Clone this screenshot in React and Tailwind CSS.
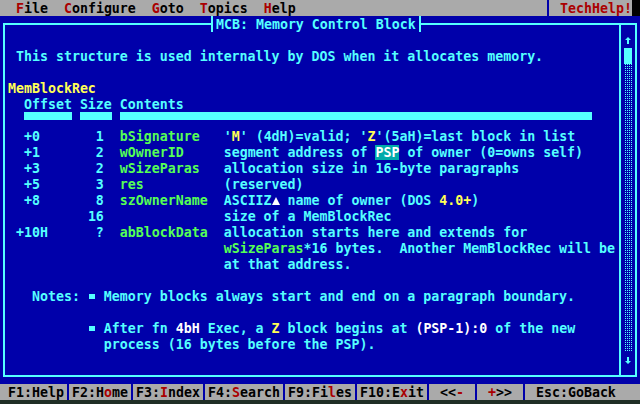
const BOX = {
  tl: 'M3 7H8V9H5V16H3Z',
  tr: 'M0 7H5V16H3V9H0Z',
  bl: 'M3 0H5V7H8V9H3Z',
  br: 'M3 0H5V9H0V7H3Z',
  lt: 'M3 0H5V16H3V9H0V7H3Z',
  rt: 'M3 0H5V7H8V9H5V16H3Z',
  td: 'M0 7H8V9H5V16H3V9H0Z',
  tu: 'M3 0H5V7H8V9H0V7H3Z',
};

function Box({ k }) {
  return (
    <svg width="8" height="16" viewBox="0 0 8 16" className="block shrink-0">
      <path d={BOX[k]} fill="#55ffff" />
    </svg>
  );
}

function HLine({ className }) {
  return (
    <div className={`flex items-center shrink-0 ${className}`}>
      <div className="h-[2px] w-full bg-[#55ffff]" />
    </div>
  );
}

function VLine() {
  return (
    <div className="w-2 shrink-0 flex justify-center">
      <div className="w-[2px] bg-[#55ffff]" />
    </div>
  );
}

function Sep() {
  return (
    <div className="w-2 h-4 shrink-0 flex justify-center bg-[#aaaaaa]">
      <div className="w-[2px] bg-[#0000aa]" />
    </div>
  );
}

const R = ({ children }) => <span className="text-[#aa0000]">{children}</span>;
const G = ({ children }) => <span className="text-[#55ff55]">{children}</span>;
const Y = ({ children }) => <span className="text-[#ffff55]">{children}</span>;
const W = ({ children }) => <span className="text-white">{children}</span>;

function Bullet() {
  return (
    <span className="inline-block w-2 h-4 align-top">
      <svg width="8" height="16" viewBox="0 0 8 16" className="block">
        <rect x="1" y="6" width="6" height="5" fill="#55ffff" />
      </svg>
    </span>
  );
}

function Triangle() {
  return (
    <span className="inline-block w-2 h-4 align-top">
      <svg width="8" height="16" viewBox="0 0 8 16" className="block">
        <path d="M4 5L8 13H0Z" fill="#ffffff" />
      </svg>
    </span>
  );
}

function Row({ children }) {
  return <div className="h-4 whitespace-pre">{children}</div>;
}

function Field({ off = '', size = '', name = '', children }) {
  return (
    <Row>
      {off.padEnd(9)}
      {size.padStart(3)}
      {'  '}
      <G>{name.padEnd(13)}</G>
      {children}
    </Row>
  );
}

function Scrollbar() {
  return (
    <div className="w-2 shrink-0 flex flex-col">
      <svg width="8" height="16" viewBox="0 0 8 16" className="block">
        <path d="M4 5L7 8H5V12H3V8H1Z" fill="#55ffff" />
      </svg>
      <div className="h-4 bg-[#55ffff]" />
      <div className="h-[288px] bg-[conic-gradient(#55ffff_25%,transparent_0)] bg-[length:2px_2px]" />
      <svg width="8" height="16" viewBox="0 0 8 16" className="block">
        <path d="M4 12L7 9H5V5H3V9H1Z" fill="#55ffff" />
      </svg>
    </div>
  );
}

export default function App() {
  return (
    <div className="w-[640px] h-[404px] bg-[#0000aa] font-['DejaVu_Sans_Mono',monospace] font-bold text-[13.28px] leading-[18px] text-[#55ffff] overflow-hidden">
      {/* menu bar */}
      <div className="flex h-4 bg-[#aaaaaa] text-black whitespace-pre">
        <div className="w-[544px]">
          {'  '}<R>F</R>ile{'  '}<R>C</R>onfigure{'  '}<R>G</R>oto{'  '}<R>T</R>opics{'  '}<R>H</R>elp
        </div>
        <Sep />
        <div className="w-20 text-[#aa0000]"> TechHelp!</div>
        <div className="w-2 bg-black" />
      </div>

      {/* top border with title */}
      <div className="flex h-4">
        <Box k="tl" />
        <HLine className="w-[200px]" />
        <Box k="lt" />
        <div className="w-[200px] whitespace-pre">MCB: Memory Control Block</div>
        <Box k="rt" />
        <HLine className="w-48" />
        <Box k="td" />
        <HLine className="w-2" />
        <Box k="tr" />
      </div>

      <div className="flex h-[336px]">
        <VLine />
        <div className="w-[608px] shrink-0">
          <Row />
          <Row> This structure is used internally by DOS when it allocates memory.</Row>
          <Row />
          <Row><Y>MemBlockRec</Y></Row>
          <Row>  Offset Size Contents</Row>
          <div className="flex h-4">
            <div className="w-4" />
            <div className="w-12 h-2 bg-[#55ffff]" />
            <div className="w-2" />
            <div className="w-8 h-2 bg-[#55ffff]" />
            <div className="w-2" />
            <div className="w-[472px] h-2 bg-[#55ffff]" />
          </div>
          <Field off="  +0" size="1" name="bSignature">
            '<Y>M</Y>' (4dH)=valid; '<Y>Z</Y>'(5aH)=last block in list
          </Field>
          <Field off="  +1" size="2" name="wOwnerID">
            segment address of <span className="bg-[#00aaaa] text-white">PSP</span> of owner (0=owns self)
          </Field>
          <Field off="  +3" size="2" name="wSizeParas">allocation size in 16-byte paragraphs</Field>
          <Field off="  +5" size="3" name="res">(reserved)</Field>
          <Field off="  +8" size="8" name="szOwnerName">
            ASCIIZ<Triangle /> name of owner (DOS <Y>4.0+</Y>)
          </Field>
          <Field size="16">size of a MemBlockRec</Field>
          <Field off=" +10H" size="?" name="abBlockData">allocation starts here and extends for</Field>
          <Field>
            <G>wSizeParas</G>*16 bytes.  Another MemBlockRec will be
          </Field>
          <Field>at that address.</Field>
          <Row />
          <Row>
            {'   Notes: '}<Bullet /> Memory blocks always start and end on a paragraph boundary.
          </Row>
          <Row />
          <Row>
            {'          '}<Bullet /> After fn <W>4bH</W> Exec, a <Y>Z</Y> block begins at <W>(PSP-1):0</W> of the new
          </Row>
          <Row>{'            '}process (16 bytes before the PSP).</Row>
          <Row />
        </div>
        <VLine />
        <Scrollbar />
        <VLine />
      </div>

      {/* bottom border */}
      <div className="flex h-4">
        <Box k="bl" />
        <HLine className="w-[608px]" />
        <Box k="tu" />
        <HLine className="w-2" />
        <Box k="br" />
      </div>

      {/* function keys */}
      <div className="flex h-4 bg-[#aaaaaa] text-black whitespace-pre">
        <div className="w-16"> F1:Help</div>
        <Sep />
        <div className="w-14">F2:H<R>o</R>me</div>
        <Sep />
        <div className="w-16">F3:<R>I</R>ndex</div>
        <Sep />
        <div className="w-[72px]">F4:<R>S</R>earch</div>
        <Sep />
        <div className="w-16">F9:Fi<R>l</R>es</div>
        <Sep />
        <div className="w-16">F10:E<R>x</R>it</div>
        <Sep />
        <div className="w-10"> {'<<'}<R>-</R></div>
        <Sep />
        <div className="w-10"> <R>+</R>{'>>'}</div>
        <Sep />
        <div className="w-28"> Esc:GoBack</div>
      </div>
      <div className="h-1 bg-[#1f2e25]" />
    </div>
  );
}
